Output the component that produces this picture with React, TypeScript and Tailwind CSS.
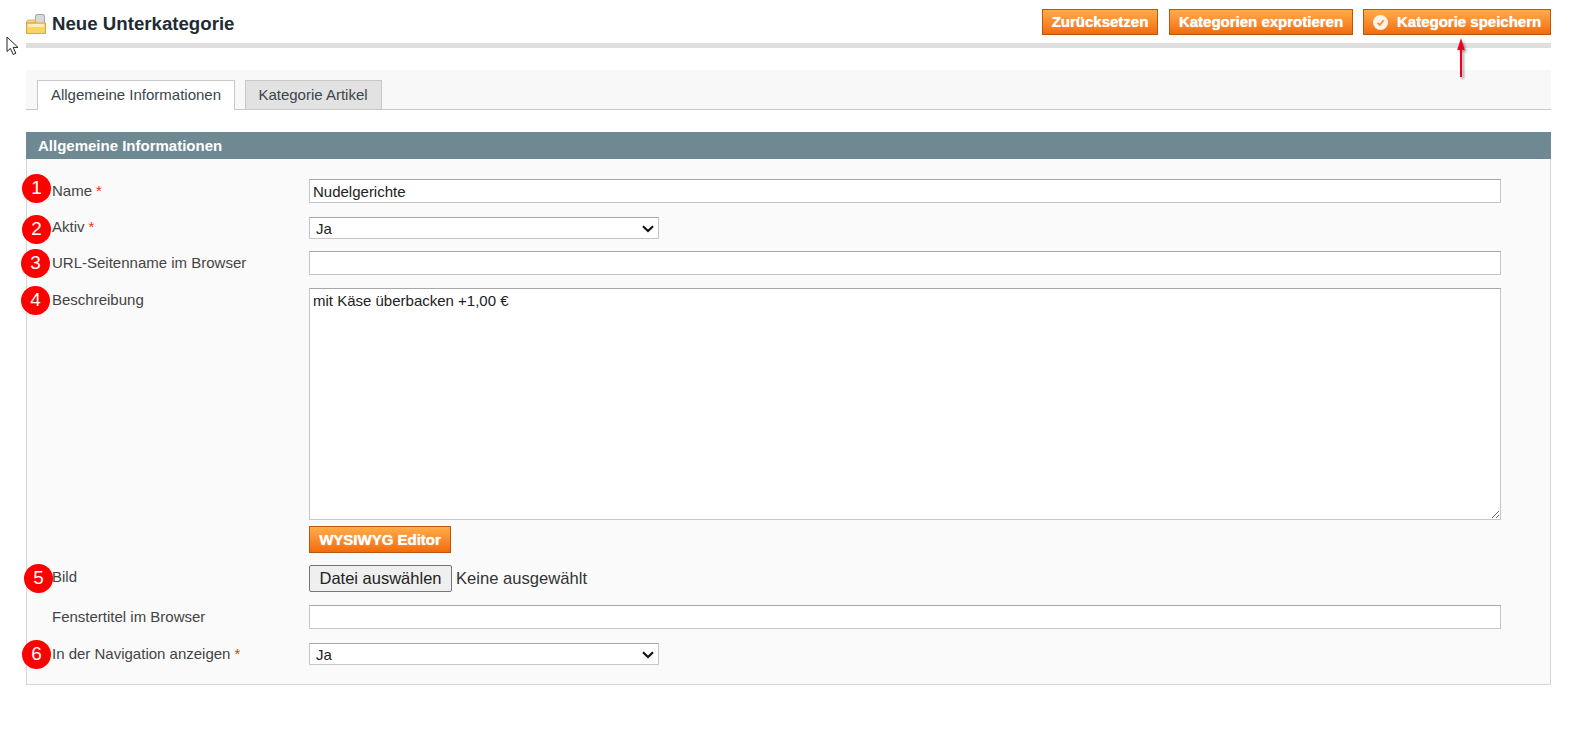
import React from 'react';

const orangeBtn =
  'border border-[#b9560f] bg-gradient-to-b from-[#ffac47] to-[#f26b08] text-white font-bold text-[15px] leading-none [text-shadow:0_0_1px_#fff]';

const inputCls =
  'block w-full h-[24px] border border-[#c6c6c6] border-t-[#a8a8a8] bg-white px-[3px] text-[15px] text-[#222] outline-none';

const Required = () => <span className="text-[#eb340a] ml-[4px]">*</span>;

const Marker = ({ n, className }: { n: number; className: string }) => (
  <div
    className={`absolute w-[29px] h-[29px] rounded-full bg-[#fe0000] text-white text-[19px] flex items-center justify-center ${className}`}
  >
    {n}
  </div>
);

const JaSelect = () => (
  <div className="relative w-[350px] h-[22px]">
    <select
      className="block appearance-none w-full h-full border border-[#c6c6c6] border-t-[#a8a8a8] bg-white pl-[6px] pb-[3px] text-[15px] text-[#222] outline-none"
      defaultValue="Ja"
    >
      <option>Ja</option>
      <option>Nein</option>
    </select>
    <svg width="12" height="8" viewBox="0 0 12 8" className="absolute right-[5px] top-[8px] pointer-events-none">
      <path d="M1 1.2 L6 6 L11 1.2" fill="none" stroke="#111" strokeWidth="2.2" />
    </svg>
  </div>
);

const FolderIcon = () => (
  <svg width="20" height="20" viewBox="0 0 20 20" className="shrink-0">
    <rect x="9.5" y="0.5" width="9" height="13" rx="1.5" fill="#d8dada" stroke="#a4a8a8" strokeWidth="1" />
    <path d="M0.5 7.5 L2 6 H9.5 V9 H0.5 Z" fill="#f3d58c" stroke="#d9a544" strokeWidth="0.8" />
    <path d="M0.5 9 H19.5 V19.5 H0.5 Z" fill="#f9d568" stroke="#e0a63e" strokeWidth="1" />
    <path d="M2 10 H18 V13 H2 Z" fill="#fdf0be" />
  </svg>
);

const CheckIcon = () => (
  <svg width="15" height="15" viewBox="0 0 15 15" className="shrink-0">
    <circle cx="7.5" cy="7.5" r="7.5" fill="#fff" fillOpacity="0.9" />
    <path d="M4.5 7.8 L6.8 10 L10.6 5.2" fill="none" stroke="#f0922f" strokeWidth="1.8" />
  </svg>
);

export default function App() {
  return (
    <div className="relative min-h-screen bg-white pl-[26px] pr-[24px] font-['Liberation_Sans',Arial,sans-serif] text-[15px] text-[#444]">
      {/* header */}
      <div className="flex justify-between h-[43px] pt-[9px]">
        <div className="flex items-start gap-[6px] pt-[5px]">
          <FolderIcon />
          <h1 className="text-[18.67px] leading-[20px] font-bold text-[#1f2b33]">Neue Unterkategorie</h1>
        </div>
        <div className="flex gap-[10px] h-[26px]">
          <button className={`${orangeBtn} w-[116px] pb-[2px]`}>Zurücksetzen</button>
          <button className={`${orangeBtn} w-[184px] ml-[1px] pb-[2px]`}>Kategorien exprotieren</button>
          <button className={`${orangeBtn} w-[188px] flex items-center pl-[9px] gap-[9px]`}>
            <CheckIcon />
            <span className="-mt-[2px]">Kategorie speichern</span>
          </button>
        </div>
      </div>
      <div className="h-[5px] bg-[#dedede]" />

      {/* tabs */}
      <div className="mt-[22px] h-[40px] bg-[#f8f8f8] border-b border-[#c8c8c8] pl-[11px] pt-[10px] flex gap-[10px]">
        <div className="w-[198px] h-[30px] bg-white border border-b-0 border-[#c8c8c8] flex items-center justify-center text-[#3a464c]">
          Allgemeine Informationen
        </div>
        <div className="w-[137px] h-[29px] bg-[#e2e2e2] border border-b-0 border-[#c8c8c8] pr-[1px] flex items-center justify-center text-[#3a464c]">
          Kategorie Artikel
        </div>
      </div>

      {/* section */}
      <div className="mt-[22px] h-[27px] bg-[#6f8992] pl-[12px] pt-[1px] flex items-center text-[15px] font-bold text-white">
        Allgemeine Informationen
      </div>
      <div className="h-[526px] bg-[#fafafa] border border-t-0 border-[#d6d6d6] pl-[25px] pr-[49px] pt-[20px]">
        <div className="flex items-center">
          <label className="w-[257px] shrink-0">Name<Required /></label>
          <input className={inputCls} defaultValue="Nudelgerichte" />
        </div>
        <div className="flex items-center mt-[14px]">
          <label className="w-[257px] shrink-0 -mt-[1px]">Aktiv<Required /></label>
          <JaSelect />
        </div>
        <div className="flex items-center mt-[12px]">
          <label className="w-[257px] shrink-0">URL-Seitenname im Browser</label>
          <input className={inputCls} />
        </div>
        <div className="flex mt-[13px]">
          <label className="w-[257px] shrink-0 pt-[1px]">Beschreibung</label>
          <div className="flex-1">
            <textarea
              className="block w-full h-[232px] border border-[#c6c6c6] border-t-[#a8a8a8] bg-white px-[3px] py-[1px] text-[15px] text-[#222] outline-none"
              defaultValue="mit Käse überbacken +1,00 €"
            />
            <button className={`${orangeBtn} h-[27px] w-[142px] mt-[6px]`}>WYSIWYG Editor</button>
          </div>
        </div>
        <div className="flex items-center mt-[12px]">
          <label className="w-[257px] shrink-0 -mt-[3px]">Bild</label>
          <button className="w-[143px] h-[27px] border border-[#767676] rounded-[2px] bg-[#efefef] text-[16.5px] text-[#222]">
            Datei auswählen
          </button>
          <span className="ml-[4px] pt-[2px] text-[16.6px] text-[#333]">Keine ausgewählt</span>
        </div>
        <div className="flex items-center mt-[13px]">
          <label className="w-[257px] shrink-0">Fenstertitel im Browser</label>
          <input className={inputCls} />
        </div>
        <div className="flex items-center mt-[14px]">
          <label className="w-[257px] shrink-0">In der Navigation anzeigen<Required /></label>
          <JaSelect />
        </div>
      </div>

      {/* annotations drawn over the page */}
      <Marker n={1} className="left-[22px] top-[174px]" />
      <Marker n={2} className="left-[22px] top-[215px]" />
      <Marker n={3} className="left-[21px] top-[249px]" />
      <Marker n={4} className="left-[21px] top-[286px]" />
      <Marker n={5} className="left-[24px] top-[564px]" />
      <Marker n={6} className="left-[22px] top-[640px]" />

      <svg width="14" height="42" viewBox="0 0 14 42" className="absolute left-[1455px] top-[37px] drop-shadow-[2px_2px_1px_rgba(0,0,0,0.35)]">
        <path d="M6 1 L9.8 13 H7 V40 H5 V13 H2.2 Z" fill="#f0001e" />
      </svg>

      <svg width="14" height="20" viewBox="0 0 14 20" className="absolute left-[6px] top-[36px]">
        <path d="M1 1 V15.5 L4.4 12.4 L7.2 18.5 L9.8 17.3 L7.2 11.4 H12 Z" fill="#fff" stroke="#222" strokeWidth="1" />
      </svg>
    </div>
  );
}
